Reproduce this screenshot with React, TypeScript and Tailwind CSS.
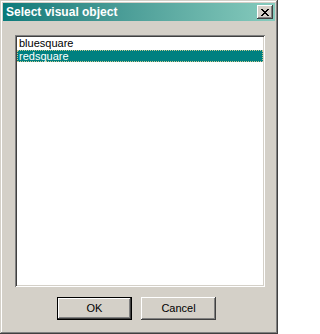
import React, { useState } from 'react';

const items = ['bluesquare', 'redsquare'];

export default function App() {
  const [selected, setSelected] = useState(1);

  return (
    <div
      className="w-[278px] h-[334px] bg-[#d4d0c8] p-[3px] flex flex-col shadow-[inset_-1px_-1px_#404040,inset_1px_1px_#d4d0c8,inset_-2px_-2px_#808080,inset_2px_2px_#ffffff]"
      style={{ fontFamily: '"Liberation Sans", Arial, sans-serif' }}
    >
      {/* Title bar */}
      <div className="h-[18px] flex items-center justify-between pl-[3px] pr-[2px] bg-gradient-to-r from-[#067a7a] to-[#86cbbd]">
        <span className="text-white text-[12px] font-bold leading-none">
          Select visual object
        </span>
        <button className="w-[16px] h-[14px] bg-[#d4d0c8] flex items-center justify-center shadow-[inset_-1px_-1px_#404040,inset_1px_1px_#ffffff,inset_-2px_-2px_#808080,inset_2px_2px_#d4d0c8]">
          <svg width="8" height="7" viewBox="0 0 8 7" shapeRendering="crispEdges">
            <path
              d="M0 0h2v1h-2zM6 0h2v1h-2zM1 1h2v1h-2zM5 1h2v1h-2zM2 2h4v1h-4zM3 3h2v1h-2zM2 4h4v1h-4zM1 5h2v1h-2zM5 5h2v1h-2zM0 6h2v1h-2zM6 6h2v1h-2z"
              fill="#000"
            />
          </svg>
        </button>
      </div>

      {/* List box */}
      <div className="ml-[12px] mt-[14px] w-[250px] h-[252px] bg-white p-[2px] shadow-[inset_1px_1px_#808080,inset_-1px_-1px_#ffffff,inset_2px_2px_#404040,inset_-2px_-2px_#d4d0c8]">
        {items.map((item, i) => (
          <div
            key={item}
            onClick={() => setSelected(i)}
            className={
              i === selected
                ? 'h-[12px] mb-px px-[1px] flex items-center text-[11px] leading-none text-white bg-[#008080] border border-dotted border-[#c8c890]'
                : 'h-[12px] mb-px px-[1px] flex items-center text-[11px] leading-none text-black border border-transparent'
            }
          >
            {item}
          </div>
        ))}
      </div>

      {/* Buttons */}
      <div className="flex mt-[10px] ml-[54px] gap-[9px]">
        <button className="w-[75px] h-[23px] bg-[#d4d0c8] text-[11px] text-black border border-black shadow-[inset_-1px_-1px_#404040,inset_1px_1px_#ffffff,inset_-2px_-2px_#808080,inset_2px_2px_#d4d0c8]">
          OK
        </button>
        <button className="w-[75px] h-[23px] bg-[#d4d0c8] text-[11px] text-black shadow-[inset_-1px_-1px_#404040,inset_1px_1px_#ffffff,inset_-2px_-2px_#808080,inset_2px_2px_#d4d0c8]">
          Cancel
        </button>
      </div>
    </div>
  );
}
